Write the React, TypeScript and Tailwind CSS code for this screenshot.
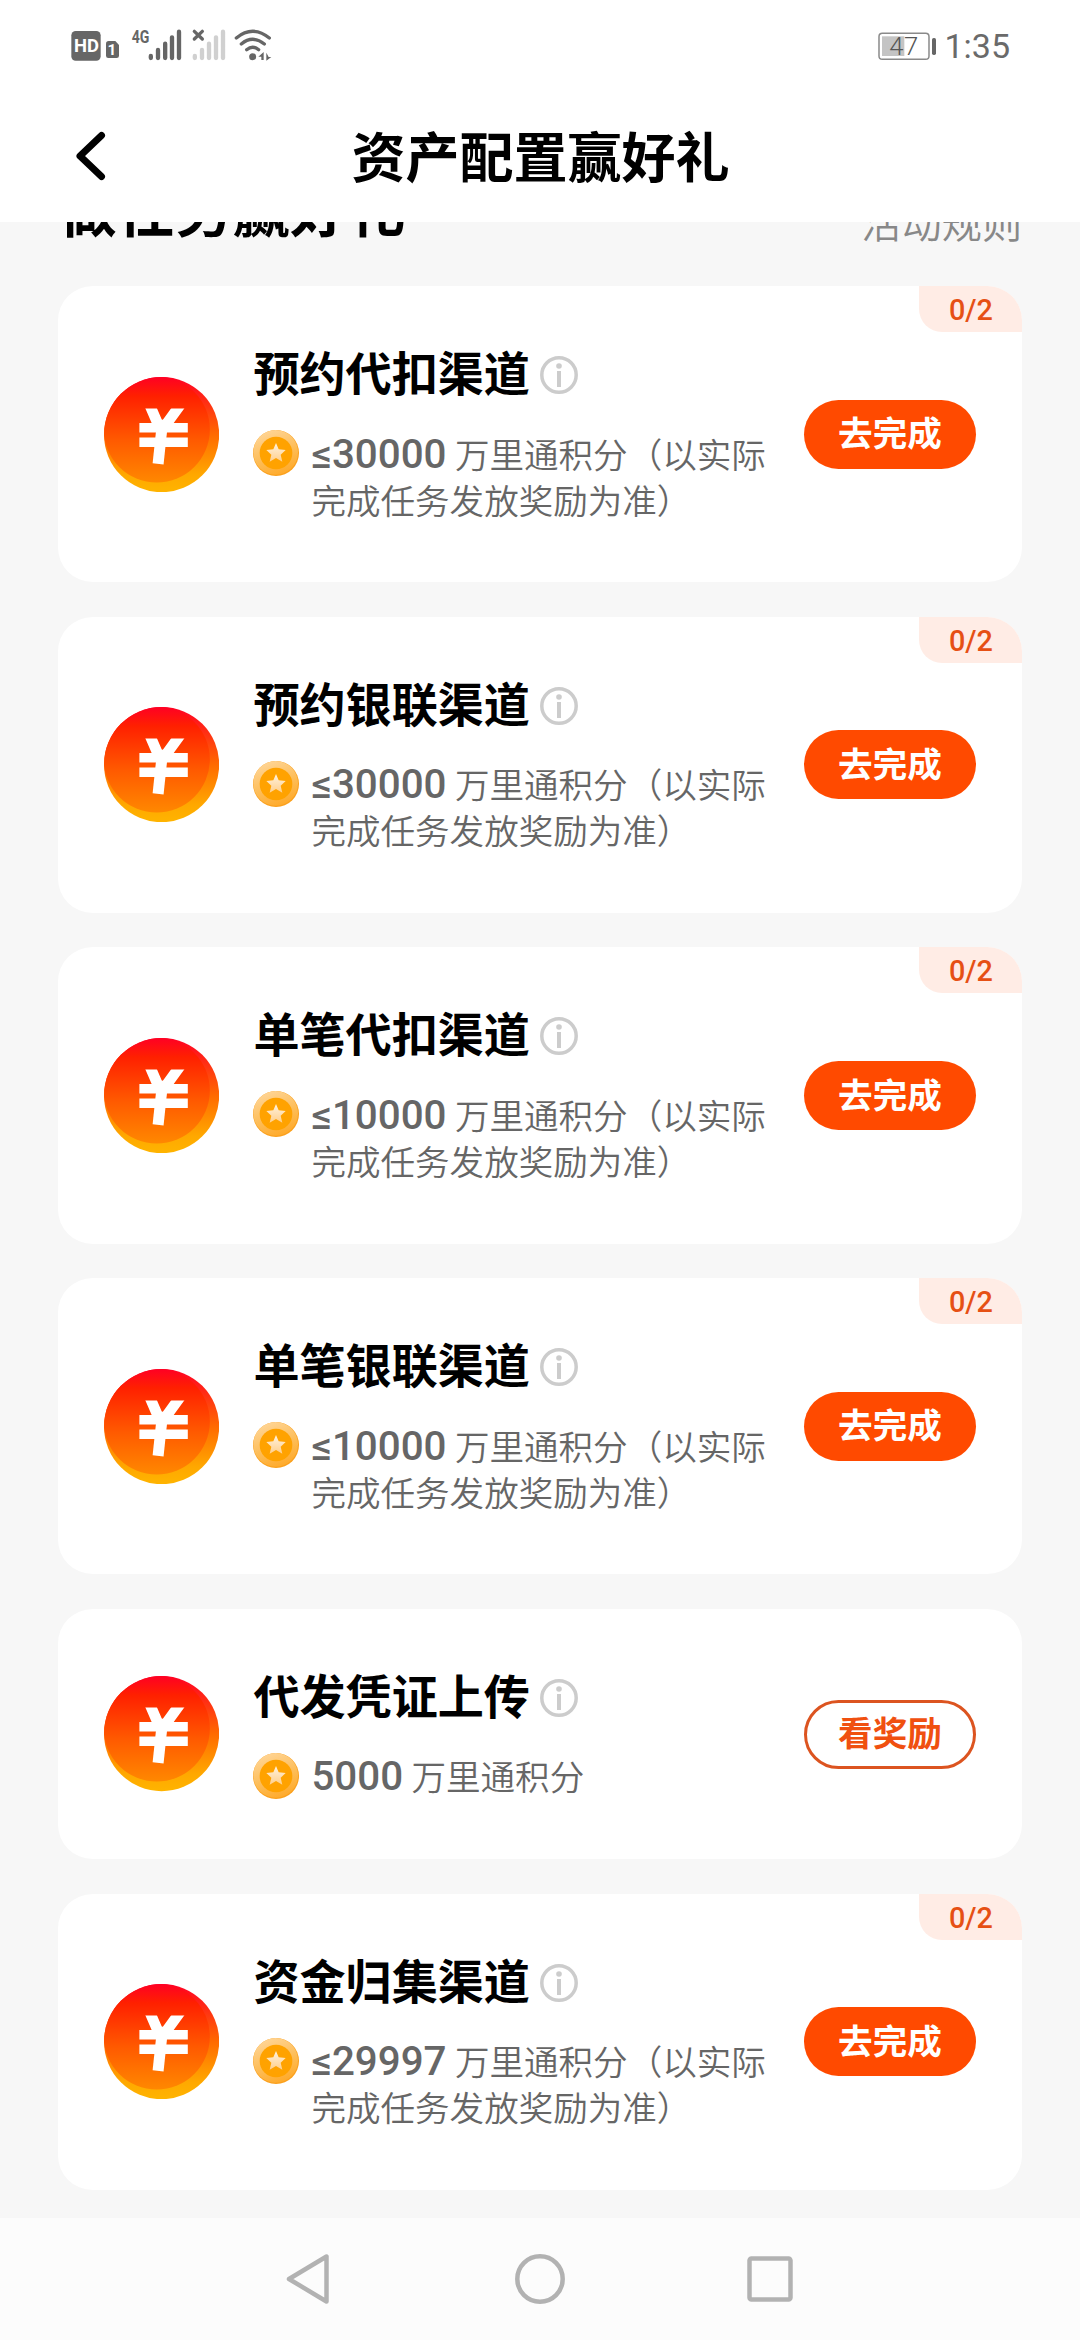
import React from "react";

interface Task {
  id: string;
  title: string;
  amount: string;
  unit: string;
  progress?: string;
  action: string;
  done?: boolean;
}

const POINTS = "万里通积分";
const POINTS_LIMIT = "万里通积分（以实际完成任务发放奖励为准）";

const tasks: Task[] = [
  { id: "t1", title: "预约代扣渠道", amount: "≤30000", unit: POINTS_LIMIT, progress: "0/2", action: "去完成" },
  { id: "t2", title: "预约银联渠道", amount: "≤30000", unit: POINTS_LIMIT, progress: "0/2", action: "去完成" },
  { id: "t3", title: "单笔代扣渠道", amount: "≤10000", unit: POINTS_LIMIT, progress: "0/2", action: "去完成" },
  { id: "t4", title: "单笔银联渠道", amount: "≤10000", unit: POINTS_LIMIT, progress: "0/2", action: "去完成" },
  { id: "t5", title: "代发凭证上传", amount: "5000", unit: POINTS, action: "看奖励", done: true },
  { id: "t6", title: "资金归集渠道", amount: "≤29997", unit: POINTS_LIMIT, progress: "0/2", action: "去完成" },
];

function StatusIcons() {
  return (
    <svg className="h-[70px] w-[240px]" viewBox="0 0 720 210" fill="#666">
      {/* HD + sim slot */}
      <rect x="64" y="63" width="88" height="89" rx="13" />
      <text x="72" y="127" fill="#fff" fontSize="54" fontWeight="700" textLength="75" lengthAdjust="spacingAndGlyphs" fontFamily="Roboto, sans-serif">HD</text>
      <path d="M176 93h20l11 12v32q0 7-7 7h-25q-7 0-7-7v-36q0-8 8-8z" />
      <text x="186" y="136" fill="#fff" fontSize="46" fontWeight="700" textAnchor="middle" fontFamily="Roboto, sans-serif">1</text>
      {/* sim 1 signal */}
      <text x="245" y="99" fontSize="56" fontWeight="700" textLength="53" lengthAdjust="spacingAndGlyphs" fontFamily="Roboto, sans-serif">4G</text>
      <g stroke="#666" strokeWidth="13" strokeLinecap="round">
        <path d="M302.500 138v6M324 120v24M345.500 101v43M366 82v62M387 65v79" />
      </g>
      {/* sim 2 signal */}
      <g stroke="#d0d0d0" strokeWidth="13" strokeLinecap="round">
        <path d="M434.500 138v6M456 120v24M477 101v43M498 82v62M519 65v79" />
      </g>
      <path d="M433 64l24 23M457 64l-24 23" stroke="#666" strokeWidth="10" strokeLinecap="round" />
      {/* wifi */}
      <g stroke="#666" strokeWidth="10" fill="none" strokeLinecap="round">
        <path d="M559 84Q608 44 658 84" />
        <path d="M574 102Q608 74 643 102" />
        <path d="M590 119Q608 104 626 119" />
      </g>
      <circle cx="608" cy="140" r="10.500" />
      <path d="M625 140l16-14v24h-7v-10zM649 128v24l15-11h-8z" />
    </svg>
  );
}

function Battery() {
  return (
    <svg className="h-[70px] w-[96px]" viewBox="-10 0 288 210" overflow="visible">
      <rect x="83" y="67" width="150" height="78" rx="10" fill="none" stroke="#8a8a8a" strokeWidth="4.500" />
      <rect x="92" y="76" width="67" height="59" fill="#c4c4c4" />
      <rect x="242" y="81" width="12" height="51" rx="5" fill="#666" />
      <text x="114" y="132" fill="#555" fontSize="77" fontWeight="300" textLength="87" fontFamily="Roboto, sans-serif">47</text>
    </svg>
  );
}

function YuanIcon() {
  return (
    <svg className="h-[115.2px] w-[115.2px] shrink-0" viewBox="0 0 345 345">
      <defs>
        <linearGradient id="yuanBase" x1="0" y1="0" x2="0" y2="1">
          <stop offset="0" stopColor="#ff0024" />
          <stop offset="0.500" stopColor="#ff6a00" />
          <stop offset="0.850" stopColor="#ffa800" />
          <stop offset="1" stopColor="#ffb400" />
        </linearGradient>
        <linearGradient id="yuanFace" gradientUnits="userSpaceOnUse" x1="0" y1="0" x2="0" y2="316">
          <stop offset="0" stopColor="#ff0024" />
          <stop offset="0.180" stopColor="#ff2000" />
          <stop offset="0.600" stopColor="#ff5a00" />
          <stop offset="1" stopColor="#ff8800" />
        </linearGradient>
        <clipPath id="yuanClip">
          <circle cx="172.500" cy="172.500" r="172.500" />
        </clipPath>
        <clipPath id="yuanTop">
          <rect x="90" y="94" width="180" height="180" />
        </clipPath>
      </defs>
      <circle cx="172.500" cy="172.500" r="172.500" fill="url(#yuanBase)" />
      <circle cx="158" cy="157" r="159" fill="url(#yuanFace)" clipPath="url(#yuanClip)" />
      <g stroke="#fff" fill="none" clipPath="url(#yuanTop)">
        <path d="M137 84L168 156M228 84L180 150" strokeWidth="32" />
        <path d="M176 128L162 260" strokeWidth="33" />
        <path d="M106 152H251" strokeWidth="28" />
        <path d="M106 195.500H251" strokeWidth="29" />
      </g>
    </svg>
  );
}

function CoinIcon() {
  return (
    <svg className="h-[46px] w-[46px] shrink-0" viewBox="0 0 138 138">
      <defs>
        <linearGradient id="coinRim" x1="0.300" y1="0" x2="0.700" y2="1">
          <stop offset="0" stopColor="#ffd596" />
          <stop offset="0.550" stopColor="#fdbd58" />
          <stop offset="1" stopColor="#ffa928" />
        </linearGradient>
        <linearGradient id="coinStar" x1="0" y1="0" x2="0" y2="1">
          <stop offset="0" stopColor="#fff3e0" />
          <stop offset="1" stopColor="#ffcf8c" />
        </linearGradient>
      </defs>
      <circle cx="69" cy="69" r="69" fill="#fba01c" />
      <circle cx="68" cy="67" r="67" fill="url(#coinRim)" />
      <circle cx="69" cy="69" r="49" fill="#ffa200" />
      <path d="M69 39l8 19 21 2-15 14 5 21-19-11-19 11 5-21-15-14 21-2z" fill="url(#coinStar)" />
    </svg>
  );
}

function InfoIcon() {
  return (
    <svg className="h-[38px] w-[38px] shrink-0" viewBox="0 0 38 38" fill="#ccc">
      <circle cx="19" cy="19" r="17.200" fill="none" stroke="#ccc" strokeWidth="3.500" />
      <circle cx="19" cy="10" r="2.800" />
      <rect x="17" y="15" width="4" height="16" />
    </svg>
  );
}

function TaskCard({ task }: { task: Task }) {
  return (
    <div
      className={`relative flex items-center rounded-[34.56px] bg-white px-[46.08px] ${
        task.done ? "h-[250.3px]" : "h-[296.2px]"
      }`}
    >
      {task.progress && (
        <span className="absolute top-0 right-0 flex h-[46px] w-[103px] items-center justify-center rounded-tr-[34.56px] rounded-bl-[23px] bg-[#ffece5] pt-[3px] text-[28.8px] font-medium text-[#e65014]">
          {task.progress}
        </span>
      )}
      <YuanIcon />

      <div className="ml-[34.56px] flex-1 self-start pt-[59px]">
        <div className="flex h-[60px] items-center">
          <h3 className="text-[46.08px] leading-[60px] font-bold text-black">{task.title}</h3>
          <div className="ml-[10px]">
            <InfoIcon />
          </div>
        </div>
        <div className="mt-[25px] flex items-start">
          <CoinIcon />
          <p className="mt-[2.5px] ml-[12px] w-[464px] text-[34.56px] leading-[46.08px] font-[350] text-[#666]">
            <span className="text-[40.32px] leading-[40px] font-medium">{task.amount}</span> {task.unit}
          </p>
        </div>
      </div>

      <button
        className={`absolute right-[46.08px] flex h-[69.12px] w-[172.8px] items-center justify-center rounded-full pt-[2px] text-[34.56px] font-bold ${
          task.done ? "border-[3px] border-[#dc5420] text-[#f05010]" : "bg-[#ff4a00] text-white"
        }`}
      >
        {task.action}
      </button>
    </div>
  );
}

export default function App() {
  return (
    <div className="flex h-[2340px] w-[1080px] flex-col overflow-hidden bg-[#f7f7f7] font-[Roboto,'Noto_Sans_CJK_SC',sans-serif]">
      {/* Status bar */}
      <div className="flex h-[80px] shrink-0 items-start justify-between bg-white pt-[10px] pr-[70px] pl-[50px]">
        <StatusIcons />
        <div className="flex items-center">
          <Battery />
          <span className="text-[34px] leading-[72px] text-[#6a6a6a]">1:35</span>
        </div>
      </div>

      {/* Title bar */}
      <header className="flex h-[142px] shrink-0 items-start bg-white pl-[74px]">
        <svg className="mt-[50px] h-[52px] w-[36px]" viewBox="0 0 36 52" fill="none" stroke="#000" strokeWidth="7" strokeLinecap="round" strokeLinejoin="round">
          <path d="M27.500 5.500L6 26l21.500 20.500" />
        </svg>
        <h1 className="mt-[40px] mr-[109px] flex-1 text-center text-[54px] leading-[80px] font-bold text-black">资产配置赢好礼</h1>
      </header>

      {/* Task list, scrolled under the title bar */}
      <main className="flex-1 overflow-hidden px-[57.6px]">
        <div className="-mt-[46px] flex h-[110px] items-start justify-between">
          <h2 className="-mt-[3px] ml-[2px] text-[57.6px] leading-[80px] font-bold text-black">做任务赢好礼</h2>
          <span className="mt-[19px] text-[40.32px] leading-[60px] font-[350] text-[#888]">活动规则</span>
        </div>
        <div className="flex flex-col gap-[34.56px]">
          {tasks.map((task) => (
            <TaskCard key={task.id} task={task} />
          ))}
        </div>
      </main>

      {/* System navigation */}
      <nav className="flex h-[122px] shrink-0 items-start justify-center gap-[177px] bg-[#fcfcfc] pt-[34px]">
        <svg className="h-[54px] w-[54px]" viewBox="0 0 54 54" fill="none" stroke="#b2b2b2" strokeWidth="4.500" strokeLinejoin="round">
          <path d="M44.500 4.500v45L7 27z" />
        </svg>
        <svg className="h-[54px] w-[54px]" viewBox="0 0 54 54" fill="none" stroke="#b2b2b2" strokeWidth="4.500">
          <circle cx="27" cy="27" r="22.700" />
        </svg>
        <svg className="h-[54px] w-[54px]" viewBox="0 0 54 54" fill="none" stroke="#b2b2b2" strokeWidth="4.500">
          <rect x="5.500" y="6.500" width="41" height="41" rx="2" />
        </svg>
      </nav>
    </div>
  );
}
